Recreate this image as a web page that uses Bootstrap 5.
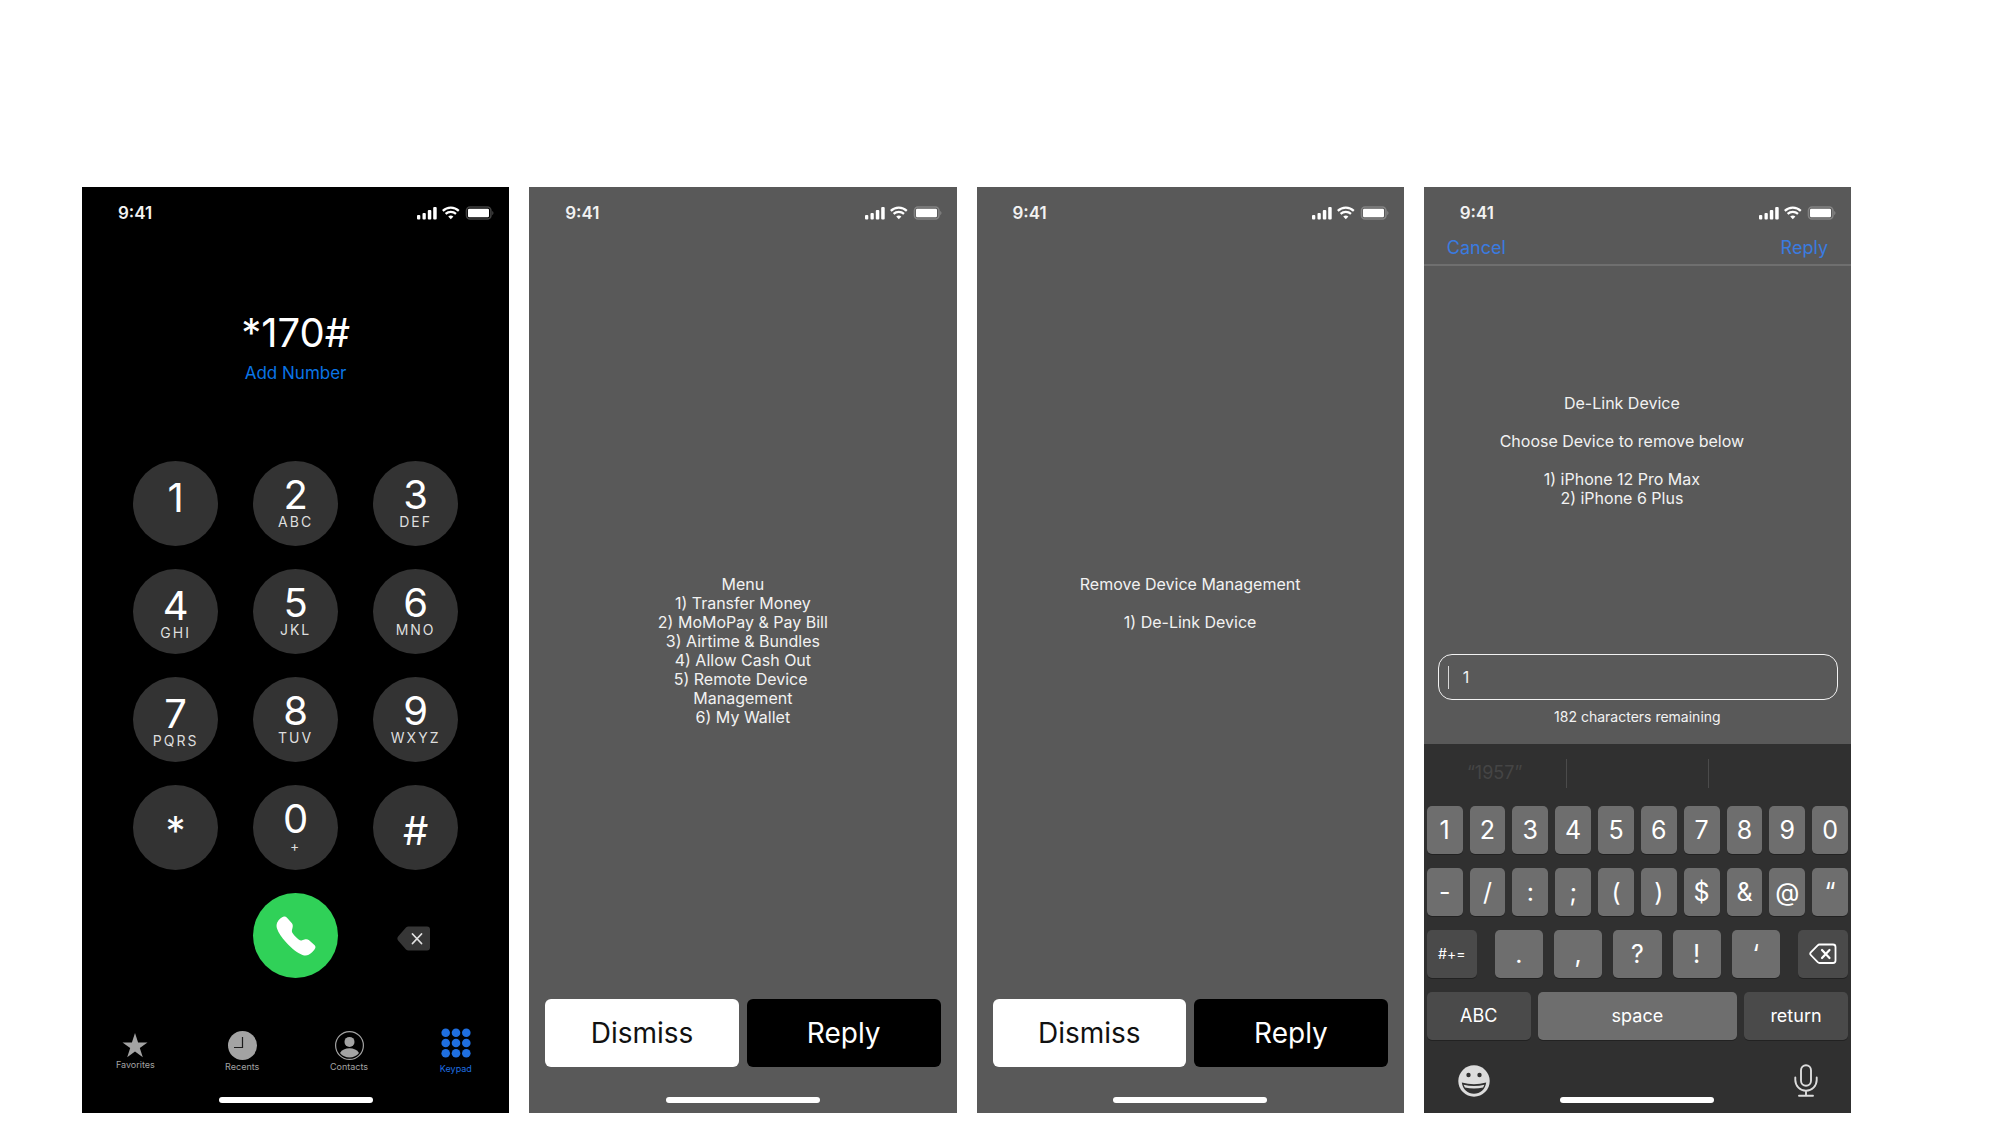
<!DOCTYPE html>
<html lang="en">
<head>
<meta charset="utf-8">
<meta name="viewport" content="width=device-width, initial-scale=1">
<title>Remote device management over USSD</title>
<link href="https://cdn.jsdelivr.net/npm/bootstrap@5.3.0/dist/css/bootstrap.min.css" rel="stylesheet">
<style>
  body { font-family: Inter, "Liberation Sans", sans-serif; background: #fff; }
  .board { padding: 187px 150px 12px 82px; gap: 20px; }
  .phone { flex: 1 1 0; min-width: 340px; background: #595959; color: #f2f2f2; }
  .phone-dark { background: #000; }
  .phone button { border: 0; padding: 0; color: inherit; background: none; }

  .status { height: 50px; padding: 2px 14px 0 36px; }
  .clock { font-size: 17px; font-weight: 600; line-height: 20px; }
  .home-bar { width: 154px; height: 6px; border-radius: 3px; background: #fff; margin: 0 auto 10px; }

  /* Dialler */
  .dialled { font-size: 40px; line-height: 48px; margin-top: 72px; color: #fff; }
  .phone .add-number { font-size: 17px; line-height: 20px; margin-top: 6px; color: #0a74e6; }
  .keypad { display: grid; grid-template-columns: repeat(3, 85px); gap: 23px 35px; justify-content: center; margin-top: 78px; }
  .keypad .dial { height: 85px; border-radius: 50%; background: #333; padding-top: 14px; }
  .keypad .dial:nth-child(3n+1) { padding-top: 17px; }
  .keypad .dial.dial-symbol { padding-top: 26px; }
  .digit { font-size: 40px; line-height: 40px; color: #fff; }
  .letters { font-size: 14px; line-height: 14px; letter-spacing: 2px; color: #dedede; }
  .keypad .call { grid-column: 2; height: 85px; border-radius: 50%; background: #30d158; }
  .tab-link { font-size: 9px; line-height: 10px; color: #a3a3a3; gap: 2px; }
  .tab-link svg { display: block; }
  .tab-active { color: #1f6fe0; gap: 6px; }
  .tabs { margin-bottom: 23px; }

  /* USSD messages */
  .message { font-size: 16px; line-height: 19px; margin-top: 338px; }
  .actions { padding: 0 16px; gap: 8px; margin-bottom: 30px; }
  .phone .action { height: 68px; border-radius: 6px; font-size: 28px; line-height: 34px; }
  .phone .action-light { background: #fff; color: #111; }
  .phone .action-dark { background: #000; color: #fff; }

  /* Reply screen */
  .reply-nav { padding: 0 23px 5px; border-bottom: 2px solid #6f6f6f; font-size: 18px; line-height: 22px; }
  .phone .nav-action { color: #3a7be0; }
  .prompt { font-size: 16px; line-height: 19px; margin-top: 128px; padding-right: 31px; }
  .reply-box { margin: 146px 13px 0 14px; height: 46px; border: 1px solid #f2f2f2; border-radius: 14px; padding: 0 9px; gap: 14px; }
  .caret { width: 1px; height: 23px; background: #d8d8d8; }
  .reply-box input { background: none; border: 0; outline: 0; padding: 0; color: inherit; font-size: 16px; line-height: 20px; min-width: 0; }
  .remaining { font-size: 14px; line-height: 18px; margin-top: 8px; }

  .keyboard { background: #303030; margin-top: 18px; }
  .suggestions { height: 62px; color: #454545; font-size: 18px; line-height: 28px; padding: 15px 0 18px; }
  .suggestions > * { flex: 1 1 0; }
  .suggestions > * + * { border-left: 1px solid #4b4b4b; }
  .keys { padding: 0 3px; gap: 14px; }
  .key-row { gap: 7px; }
  .key-group { gap: 11px; margin: 0 11px; flex: 1 1 0; }
  .phone .key { flex: 1 1 0; height: 48px; border-radius: 5px; background: #6e6e6e; color: #fff; font-size: 25px; line-height: 30px; box-shadow: 0 1px 0 #222; }
  .phone .key-dark { background: #4a4a4a; }
  .phone .key-word { font-size: 18px; }
  .phone .key-wide { flex: 0 0 104px; }
  .phone .key-side { flex: 0 0 50px; font-size: 14px; }
  .key-tools { padding: 0 33px 0 34px; margin-top: 24px; }
</style>
</head>
<body>
<svg width="0" height="0" class="position-absolute" aria-hidden="true">
  <symbol id="status-icons" viewBox="0 0 78 14">
    <g fill="#fff">
      <rect x="0" y="9" width="3.300" height="4.500" rx="1"/>
      <rect x="5.500" y="7" width="3.300" height="6.500" rx="1"/>
      <rect x="10.800" y="4" width="3.500" height="9.500" rx="1"/>
      <rect x="16.200" y="1" width="3.500" height="12.500" rx="1"/>
      <path d="M33.800 13.300l-2.600-2.700a3.900 3.900 0 0 1 5.200 0z"/>
    </g>
    <g fill="none" stroke="#fff" stroke-width="2.200">
      <path d="M25.800 4.900a11.600 11.600 0 0 1 16 0M28.600 7.900a7.600 7.600 0 0 1 10.400 0"/>
    </g>
    <rect x="49.500" y="1" width="24.400" height="12" rx="3.500" fill="none" stroke="#fff" stroke-opacity=".25" stroke-width="1.600"/>
    <rect x="51" y="2.700" width="21" height="8.600" rx="1.200" fill="#fff"/>
    <path d="M75.300 5v4.200c1.500-.7 1.500-3.500 0-4.200z" fill="#fff" opacity=".3"/>
  </symbol>
</svg>

<main class="board d-flex flex-wrap min-vh-100">

  <section class="phone phone-dark d-flex flex-column" aria-label="Dialler">
    <div class="status d-flex justify-content-between align-items-center">
      <span class="clock">9:41</span>
      <svg width="78" height="14" aria-hidden="true"><use href="#status-icons"/></svg>
    </div>
    <div class="dialled text-center">*170#</div>
    <button type="button" class="add-number align-self-center">Add Number</button>
    <div class="keypad">
      <button type="button" class="dial d-flex flex-column align-items-center"><span class="digit">1</span></button>
      <button type="button" class="dial d-flex flex-column align-items-center"><span class="digit">2</span><span class="letters">ABC</span></button>
      <button type="button" class="dial d-flex flex-column align-items-center"><span class="digit">3</span><span class="letters">DEF</span></button>
      <button type="button" class="dial d-flex flex-column align-items-center"><span class="digit">4</span><span class="letters">GHI</span></button>
      <button type="button" class="dial d-flex flex-column align-items-center"><span class="digit">5</span><span class="letters">JKL</span></button>
      <button type="button" class="dial d-flex flex-column align-items-center"><span class="digit">6</span><span class="letters">MNO</span></button>
      <button type="button" class="dial d-flex flex-column align-items-center"><span class="digit">7</span><span class="letters">PQRS</span></button>
      <button type="button" class="dial d-flex flex-column align-items-center"><span class="digit">8</span><span class="letters">TUV</span></button>
      <button type="button" class="dial d-flex flex-column align-items-center"><span class="digit">9</span><span class="letters">WXYZ</span></button>
      <button type="button" class="dial dial-symbol d-flex flex-column align-items-center"><span class="digit">*</span></button>
      <button type="button" class="dial d-flex flex-column align-items-center"><span class="digit">0</span><span class="letters">+</span></button>
      <button type="button" class="dial dial-symbol d-flex flex-column align-items-center"><span class="digit">#</span></button>
      <button type="button" class="call d-flex justify-content-center align-items-center" aria-label="Call">
        <svg width="40" height="40" viewBox="0 0 40 40" fill="#fff" aria-hidden="true"><path d="M1.200 6.500C2.800 3.300 5.600 1 7.900.6c1.200-.2 2.200.3 3.100 1.200l4.700 5.200c1.200 1.400 1.300 2.900.9 4.600l-.6 2.400c-.3 1.200 0 2.200.7 3.200 2 2.800 3.700 4.600 6.300 6.600 1 .7 2 .9 3.100.5l2.400-.8c1.700-.5 3.200-.4 4.600.8l5.300 4.600c1 .9 1.300 2 .9 3.200-.9 2.400-3.500 5-6.600 6.600-1.900.9-4 .9-6.200.2-5.200-1.800-10.900-6.500-16.500-12.600C5.300 20.900 2.400 16.800 1 12.400c-.6-2-.6-4 .2-5.900z"/></svg>
      </button>
      <button type="button" class="pt-1 pe-1 d-flex justify-content-center align-items-center" aria-label="Delete digit">
        <svg width="34" height="26" viewBox="0 0 34 26" aria-hidden="true"><path d="M11.500 1.500H30q3 0 3 3v18q0 3-3 3H11.500q-1.500 0-2.500-1L1.500 16q-2.300-2.500 0-5L9 2.500q1-1 2.500-1z" fill="#363636"/><path d="M15.500 9l9 9.500M24.500 9l-9 9.500" stroke="#e2e2e2" stroke-width="1.800" stroke-linecap="round"/></svg>
      </button>
    </div>
    <nav class="tabs d-flex mt-auto" aria-label="Phone">
      <a href="#" class="tab-link d-flex flex-column align-items-center text-decoration-none col-3 align-self-center">
        <svg width="26" height="25" viewBox="0 0 26 25" fill="currentColor" aria-hidden="true"><path d="M13 0l3.100 9.400H25.500l-7.700 5.600 3 9.300L13 18.500l-7.800 5.800 3-9.300L.5 9.400h9.400z"/></svg>
        Favorites</a>
      <a href="#" class="tab-link d-flex flex-column align-items-center text-decoration-none col-3 align-self-center">
        <svg width="29" height="29" viewBox="0 0 29 29" aria-hidden="true"><circle cx="14.500" cy="14.500" r="14.500" fill="currentColor"/><path d="M14.500 6v10.500H6" fill="none" stroke="#1c1c1c" stroke-width="1.200"/></svg>
        Recents</a>
      <a href="#" class="tab-link d-flex flex-column align-items-center text-decoration-none col-3 align-self-center">
        <svg width="29" height="29" viewBox="0 0 29 29" fill="currentColor" aria-hidden="true"><circle cx="14.500" cy="14.500" r="13.900" fill="none" stroke="currentColor" stroke-width="1.200"/><circle cx="14.500" cy="10.900" r="5"/><path d="M5 22c1.800-3.200 5.400-4.700 9.500-4.700S22.200 18.800 24 22c-2.200 2.900-5.600 4.500-9.500 4.500S7.200 24.900 5 22z"/></svg>
        Contacts</a>
      <a href="#" class="tab-link tab-active d-flex flex-column align-items-center text-decoration-none col-3 align-self-center" aria-current="page">
        <svg width="30" height="30" viewBox="0 0 30 30" fill="currentColor" aria-hidden="true"><circle cx="4.700" cy="4.700" r="4.300"/><circle cx="15" cy="4.700" r="4.300"/><circle cx="25.300" cy="4.700" r="4.300"/><circle cx="4.700" cy="15" r="4.300"/><circle cx="15" cy="15" r="4.300"/><circle cx="25.300" cy="15" r="4.300"/><circle cx="4.700" cy="25.300" r="4.300"/><circle cx="15" cy="25.300" r="4.300"/><circle cx="25.300" cy="25.300" r="4.300"/></svg>
        Keypad</a>
    </nav>
    <div class="home-bar"></div>
  </section>

  <section class="phone d-flex flex-column" aria-label="Menu">
    <div class="status d-flex justify-content-between align-items-center">
      <span class="clock">9:41</span>
      <svg width="78" height="14" aria-hidden="true"><use href="#status-icons"/></svg>
    </div>
    <p class="message text-center mb-0">Menu<br>1) Transfer Money<br>2) MoMoPay &amp; Pay Bill<br>3) Airtime &amp; Bundles<br>4) Allow Cash Out<br>5) Remote Device&nbsp;<br>Management<br>6) My Wallet</p>
    <div class="actions d-flex mt-auto">
      <button type="button" class="action action-light flex-fill w-50">Dismiss</button>
      <button type="button" class="action action-dark flex-fill w-50">Reply</button>
    </div>
    <div class="home-bar"></div>
  </section>

  <section class="phone d-flex flex-column" aria-label="Remove Device Management">
    <div class="status d-flex justify-content-between align-items-center">
      <span class="clock">9:41</span>
      <svg width="78" height="14" aria-hidden="true"><use href="#status-icons"/></svg>
    </div>
    <p class="message text-center mb-0">Remove Device Management<br><br>1) De-Link Device</p>
    <div class="actions d-flex mt-auto">
      <button type="button" class="action action-light flex-fill w-50">Dismiss</button>
      <button type="button" class="action action-dark flex-fill w-50">Reply</button>
    </div>
    <div class="home-bar"></div>
  </section>

  <section class="phone d-flex flex-column" aria-label="De-Link Device">
    <div class="status d-flex justify-content-between align-items-center">
      <span class="clock">9:41</span>
      <svg width="78" height="14" aria-hidden="true"><use href="#status-icons"/></svg>
    </div>
    <div class="reply-nav d-flex justify-content-between">
      <button type="button" class="nav-action">Cancel</button>
      <button type="button" class="nav-action">Reply</button>
    </div>
    <p class="prompt text-center mb-0">De-Link Device<br><br>Choose Device to remove below<br><br>1) iPhone 12 Pro Max<br>2) iPhone 6 Plus</p>
    <div class="reply-box d-flex align-items-center">
      <span class="caret"></span>
      <input type="text" class="flex-fill" value="1" aria-label="Reply text">
    </div>
    <div class="remaining text-center">182 characters remaining</div>

    <div class="keyboard flex-fill d-flex flex-column">
      <div class="suggestions d-flex text-center"><span>“1957”</span><span></span><span></span></div>
      <div class="keys d-flex flex-column">
        <div class="key-row d-flex">
          <button type="button" class="key">1</button><button type="button" class="key">2</button><button type="button" class="key">3</button><button type="button" class="key">4</button><button type="button" class="key">5</button><button type="button" class="key">6</button><button type="button" class="key">7</button><button type="button" class="key">8</button><button type="button" class="key">9</button><button type="button" class="key">0</button>
        </div>
        <div class="key-row d-flex">
          <button type="button" class="key">-</button><button type="button" class="key">/</button><button type="button" class="key">:</button><button type="button" class="key">;</button><button type="button" class="key">(</button><button type="button" class="key">)</button><button type="button" class="key">$</button><button type="button" class="key">&amp;</button><button type="button" class="key">@</button><button type="button" class="key">“</button>
        </div>
        <div class="key-row d-flex">
          <button type="button" class="key key-dark key-side">#+=</button>
          <div class="key-group d-flex">
            <button type="button" class="key">.</button><button type="button" class="key">,</button><button type="button" class="key">?</button><button type="button" class="key">!</button><button type="button" class="key">‘</button>
          </div>
          <button type="button" class="key key-dark key-side d-flex justify-content-center align-items-center" aria-label="Delete">
            <svg width="28" height="22" viewBox="0 0 28 22" fill="none" stroke="#fff" stroke-width="1.800" stroke-linecap="round" stroke-linejoin="round" aria-hidden="true"><path d="M10.500 1.500H24q2.500 0 2.500 2.500v13.500q0 2.500-2.500 2.500H10.500q-1 0-1.800-.8L1.800 12q-1.200-1.300 0-2.600l6.900-7.100q.8-.8 1.800-.8z"/><path d="M13 7l7.500 8M20.500 7L13 15" stroke-width="2.200"/></svg>
          </button>
        </div>
        <div class="key-row d-flex">
          <button type="button" class="key key-dark key-word key-wide">ABC</button>
          <button type="button" class="key key-word">space</button>
          <button type="button" class="key key-dark key-word key-wide">return</button>
        </div>
      </div>
      <div class="key-tools d-flex justify-content-between">
        <button type="button" aria-label="Emoji">
          <svg class="d-block" width="32" height="32" viewBox="0 0 32 32" aria-hidden="true"><circle cx="16" cy="16" r="15.700" fill="#dcdcdc"/><circle cx="10.500" cy="10" r="2.200" fill="#303030"/><circle cx="21.500" cy="10" r="2.200" fill="#303030"/><path d="M3.800 17.500q12.200 3.500 24.400 0c-1 7.200-6 11.200-12.200 11.200S4.800 24.700 3.800 17.500z" fill="#303030"/><path d="M5.600 19.800q10.400 2.400 20.800 0l-1.300 2.700q-9.100 2-18.200 0z" fill="#dcdcdc"/></svg>
        </button>
        <button type="button" aria-label="Dictate">
          <svg class="d-block" width="24" height="33" viewBox="0 0 24 33" fill="none" stroke="#dcdcdc" stroke-width="1.900" stroke-linecap="round" aria-hidden="true"><rect x="7" y="1.200" width="10" height="20.500" rx="5"/><path d="M1.300 13.500v2.500a10.700 10.700 0 0 0 21.400 0v-2.500M12 26.700v4.800M5 31.800h14"/></svg>
        </button>
      </div>
      <div class="home-bar mt-auto"></div>
    </div>
  </section>
</main>
<script src="https://cdn.jsdelivr.net/npm/bootstrap@5.3.0/dist/js/bootstrap.bundle.min.js"></script>
</body>
</html>
